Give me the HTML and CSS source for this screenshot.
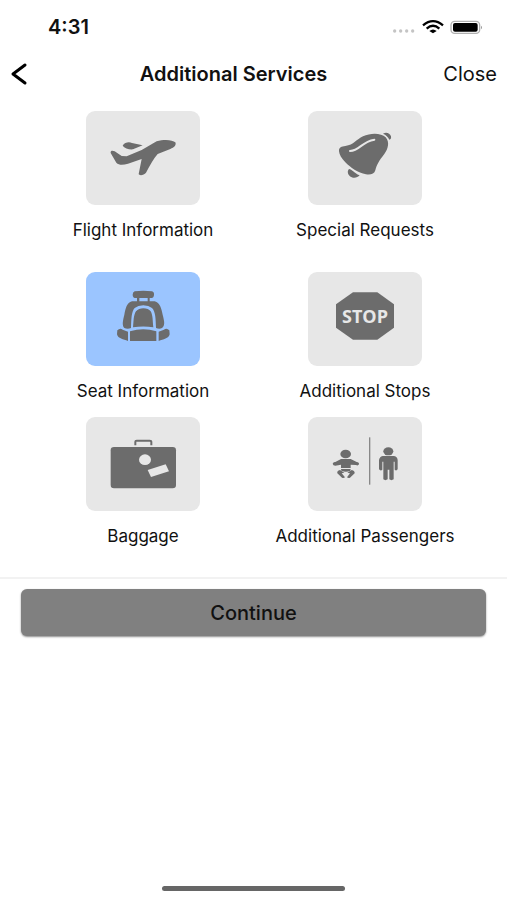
FILE: index.html
```html
<!DOCTYPE html>
<html lang="en">
<head>
<meta charset="utf-8">
<meta name="viewport" content="width=device-width, initial-scale=1">
<title>Additional Services</title>
<link rel="stylesheet" href="styles.css">
</head>
<body>
<div class="status">
  <span class="time">4:31</span>
  <svg class="indicators" width="92" height="16" viewBox="0 0 276 48" aria-hidden="true">
    <g fill="#c4c4c4"><circle cx="11" cy="36" r="5"/><circle cx="29" cy="36" r="5"/><circle cx="47" cy="36" r="5"/><circle cx="65" cy="36" r="5"/></g>
    <g fill="none" stroke="#000" stroke-width="7"><path d="M96 19Q126-6 156 19"/><path d="M107 29Q126 12 145 29"/></g>
    <path d="M115 36Q126 27 137 36L126 43Z"/>
    <rect x="180" y="7" width="86" height="36" rx="11" fill="#fff" stroke="#b0b0b0" stroke-width="4"/>
    <rect x="186" y="12" width="74" height="26" rx="6"/>
    <path d="M270 20Q276 25 270 31Z" fill="#999"/>
  </svg>
</div>
<header class="nav">
  <button class="back" type="button" aria-label="Back">
    <svg width="18" height="24" viewBox="0 0 18 24"><path d="M15 3L3 12L15 21" fill="none" stroke="#000" stroke-width="3" stroke-linecap="round" stroke-linejoin="round"/></svg>
  </button>
  <h1>Additional Services</h1>
  <button class="close" type="button">Close</button>
</header>
<main>
  <div class="services">
    <button class="service spaced" type="button">
      <svg class="tile" viewBox="78 18 342 282" aria-hidden="true">
        <path d="M152 144C151 136 158 136 164 139L185 153L200 154L245 135L290 109C312 102 338 104 346 112C350 121 342 128 331 132L293 147C281 160 270 181 258 203C252 211 238 213 236 207L245 162L204 176C189 180 177 181 169 173Z"/>
        <path d="M188 122C194 112 207 110 216 114L248 121L219 133C207 134 193 130 188 122Z"/>
      </svg>
      <span>Flight Information</span>
    </button>
    <button class="service spaced" type="button">
      <svg class="tile" viewBox="69 18 342 282" aria-hidden="true">
        <path d="M162 139C161 127 170 124 181 123C207 120 214 103 234 94C258 83 289 84 302 97C315 112 309 132 298 147C282 168 276 177 271 196C268 207 257 210 243 208C219 204 196 187 181 172C169 160 163 149 162 139Z"/>
        <path d="M195 138C225 137 229 110 268 104" fill="none" stroke="#e7e7e7" stroke-width="6" stroke-linecap="round"/>
        <path d="M294 86C304 81 314 84 318 94C319 100 317 104 313 104C309 95 303 90 294 86Z"/>
        <path d="M192 192C201 192 206 204 224 211C217 220 202 221 194 213C187 206 187 197 192 192Z"/>
      </svg>
      <span>Special Requests</span>
    </button>
    <button class="service selected" type="button">
      <svg class="tile" viewBox="78 21 342 282" aria-hidden="true">
        <path d="M224 79Q250 75 276 79Q283 81 282 90Q281 99 275 99H269V109H284C300 113 304 130 308 149C313 168 316 181 306 189Q298 194 288 189C287 163 287 140 276 129Q266 121 250 121Q234 121 224 129C214 140 214 163 213 189Q203 194 193 189C185 180 189 166 193 149C197 130 200 113 216 109H231V99H225Q218 98 218 89Q218 81 224 79ZM238 99V109H263V99Z" fill-rule="evenodd"/>
        <path d="M228 139Q236 130 250 130Q265 130 272 139C279 151 278 170 280 187Q250 182 219 187C221 170 220 151 228 139Z"/>
        <path d="M210 199Q250 187 289 199V228H210Z"/>
        <path d="M172 196Q180 188 188 194L204 200V228C190 223 174 221 171 208ZM328 196Q320 188 312 194L296 200V228C310 223 326 221 329 208Z"/>
      </svg>
      <span>Seat Information</span>
    </button>
    <button class="service" type="button">
      <svg class="tile" viewBox="69 21 342 282" aria-hidden="true">
        <path d="M204 82H277L327 118V188L277 224H204L153 188V118Z"/>
        <text class="stop" x="240" y="174" text-anchor="middle">STOP</text>
      </svg>
      <span>Additional Stops</span>
    </button>
    <button class="service" type="button">
      <svg class="tile" viewBox="78 21 342 282" aria-hidden="true">
        <rect x="152" y="111" width="196" height="124" rx="10"/>
        <path d="M226 106V95Q226 92 230 92H269Q274 92 274 96V106" fill="none" stroke="#6c6c6c" stroke-width="6"/>
        <ellipse cx="255" cy="149" rx="18" ry="16" fill="#e7e7e7"/>
        <path d="M263 180L317 163L327 184L273 201Z" fill="#e7e7e7"/>
      </svg>
      <span>Baggage</span>
    </button>
    <button class="service" type="button">
      <svg class="tile" viewBox="129 21 342 282" aria-hidden="true">
        <rect x="312" y="82" width="4" height="142" fill="#888"/>
        <ellipse cx="242" cy="132" rx="16" ry="13"/>
        <path d="M203 161Q205 155 211 156L228 147H257L275 156Q283 157 282 163Q279 168 273 165L257 164V174H228V164L211 167Q204 167 203 161Z"/>
        <path d="M228 177H257L256 182Q243 188 229 182Z"/>
        <path d="M225 180L238 188L230 190L240 202Q236 205 231 203L217 190Q215 183 225 180ZM260 180L247 188L255 190L246 202Q250 205 255 203L269 190Q270 183 260 180Z"/>
        <ellipse cx="370" cy="124" rx="15" ry="12"/>
        <path d="M353 138H387Q398 140 398 151V178Q394 184 389 179V155H386V208Q379 213 373 208V179H368V208Q361 213 355 208V155H352V179Q347 184 342 178V151Q343 140 353 138Z"/>
      </svg>
      <span>Additional Passengers</span>
    </button>
  </div>
  <div class="actions">
    <button class="continue" type="button">Continue</button>
  </div>
</main>
<div class="home"></div>
</body>
</html>
```
FILE: styles.css
```css
* { box-sizing: border-box; }

body {
  margin: 0;
  min-height: 100vh;
  display: flex;
  flex-direction: column;
  background: #fff;
  color: #111;
  font-family: Inter, "Liberation Sans", sans-serif;
}

button {
  margin: 0;
  padding: 0;
  border: 0;
  background: none;
  color: inherit;
  font: inherit;
  cursor: pointer;
}

svg { display: block; }

.status {
  display: flex;
  align-items: center;
  justify-content: space-between;
  height: 54px;
  padding: 0 24px 0 48px;
}

.time {
  font-size: 20px;
  font-weight: 600;
}

.nav {
  display: grid;
  grid-template-columns: 1fr auto 1fr;
  align-items: center;
  height: 40px;
  padding: 0 10px;
}

.back { justify-self: start; }

.nav h1 {
  margin: 0;
  padding-right: 40px;
  font-size: 20px;
  font-weight: 600;
}

.close {
  justify-self: end;
  font-size: 20px;
}

.services {
  display: grid;
  grid-template-columns: 1fr 1fr;
  row-gap: 15px;
  padding: 17px 31px 30px 32px;
}

.service {
  display: flex;
  flex-direction: column;
  align-items: center;
  gap: 14px;
  font-size: 17px;
  line-height: 22px;
  white-space: nowrap;
}

.spaced { margin-bottom: 16px; }

.tile {
  width: 114px;
  height: 94px;
  border-radius: 9px;
  background: #e7e7e7;
  fill: #6c6c6c;
}

.selected .tile { background: #9bc5ff; }

.stop {
  fill: #e7e7e7;
  font-family: "Open Sans", sans-serif;
  font-size: 54px;
  font-weight: 700;
}

.actions {
  padding: 10px 21px;
  border-top: 2px solid #f2f2f2;
}

.continue {
  width: 100%;
  height: 47px;
  border-radius: 6px;
  background: #808080;
  box-shadow: 0 1px 2px rgba(0, 0, 0, 0.45);
  font-size: 20px;
  font-weight: 500;
}

.home {
  width: 36%;
  height: 5px;
  margin: auto auto 9px;
  border-radius: 3px;
  background: #666;
}
```
